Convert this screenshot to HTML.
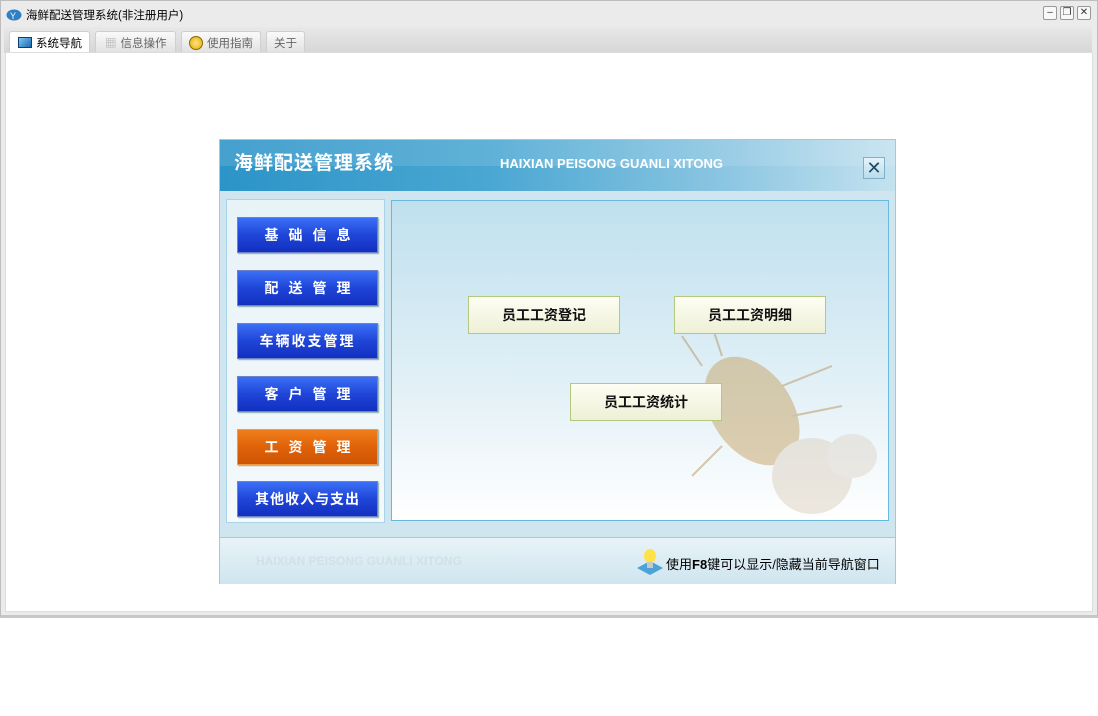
<!DOCTYPE html>
<html><head><meta charset="utf-8"><style>
*{margin:0;padding:0;box-sizing:border-box}
body{width:1098px;height:716px;background:#fff;position:relative;overflow:hidden;font-family:"Liberation Sans","Noto Sans CJK SC",sans-serif}
.abs{position:absolute}
.win{left:0;top:0;width:1098px;height:618px;background:#ecebeb;border:1px solid #bdbdbd;border-bottom:3px solid #c8c6c6}
.title{left:26px;top:7px;font-size:11.5px;color:#000}
.tabs{left:4px;top:27px;width:1088px;height:26px;background:linear-gradient(#e8e8e8,#d6d6d6)}
.tab{top:31px;height:21px;font-size:11.5px;color:#666;background:linear-gradient(#fafafa,#e2e2e2);border:1px solid #cfcfcf;border-bottom:none;border-radius:3px 3px 0 0;padding:3px 0 0 0}
.content{left:5px;top:52px;width:1088px;height:560px;background:#fff;border:1px solid #ddd}
.wb{top:6px;width:14px;height:14px;border:1px solid #999;border-radius:2px;background:#f8f8f8;font-size:10px;line-height:12px;text-align:center;color:#333}
.dlg{left:219px;top:139px;width:677px;height:445px;background:#cfe6f0;border:1px solid #9ccbe0}
.hdr{left:0;top:0;width:675px;height:51px;background:linear-gradient(90deg,#2c94c8 0%,#4aa7d2 40%,#8cc6e2 75%,#c4e2ef 100%)}
.hdr:after{content:"";position:absolute;left:0;top:0;width:100%;height:26px;background:rgba(255,255,255,.12)}
.lp{left:6px;top:59px;width:159px;height:324px;background:linear-gradient(#e8f3f8,#f4f9fb);border:1px solid #a9d3e6}
.btn{left:10px;width:141px;height:36px;color:#fff;font-size:14px;font-weight:bold;text-align:center;line-height:34px;border:1px solid #6d82c8;box-shadow:1px 1px 1px #8aa;background:linear-gradient(#3b6ff5,#1f45d8 50%,#1230c0)}
.org{background:linear-gradient(#f07f1b,#e0620a 50%,#cf5504);border-color:#f29a45}
.rp{left:171px;top:60px;width:498px;height:321px;border:1px solid #68b7dc;background:linear-gradient(#bfe0ee,#e3f1f7 60%,#fff)}
.cb{width:152px;height:38px;border:1px solid #b3c97e;background:linear-gradient(#fdfdf3,#eef0d6);font-size:14px;font-weight:bold;text-align:center;line-height:36px;color:#111}
.ftr{left:0;top:397px;width:675px;height:47px;border-top:1px solid #c8b7e0;background:linear-gradient(#e8f3f8,#cfe5ef)}
</style></head><body>
<div class="abs win"></div>
<svg class="abs" style="left:6px;top:7px" width="16" height="14"><ellipse cx="8" cy="8" rx="7.5" ry="5.5" fill="#2f7fc4"/><text x="4" y="12" font-size="9" fill="#fff" font-family="Liberation Sans">Y</text></svg>
<div class="abs title">海鲜配送管理系统(非注册用户)</div>
<div class="abs wb" style="left:1043px">–</div>
<div class="abs wb" style="left:1060px">❐</div>
<div class="abs wb" style="left:1077px">✕</div>
<div class="abs tabs"></div>
<div class="abs tab" style="left:9px;width:81px;background:#fff;color:#000;height:22px"><span style="display:inline-block;width:14px;height:11px;border:1px solid #0b3d7a;background:linear-gradient(135deg,#7cc6f2,#1c6ab4);margin:0 4px 0 8px;vertical-align:-1px"></span>系统导航</div>
<div class="abs tab" style="left:95px;width:81px"><span style="color:#aaa;margin:0 4px 0 9px">▦</span>信息操作</div>
<div class="abs tab" style="left:181px;width:80px"><span style="display:inline-block;width:14px;height:14px;border-radius:50%;background:radial-gradient(#ffe680,#e8a800);border:1px solid #8a6a00;margin:0 4px 0 7px;vertical-align:-3px"></span>使用指南</div>
<div class="abs tab" style="left:266px;width:39px;text-align:center">关于</div>
<div class="abs content"></div>
<div class="abs dlg">
 <div class="abs hdr"></div>
 <div class="abs" style="left:14px;top:8px;font-size:19px;font-weight:bold;color:#fff;letter-spacing:1px;z-index:2">海鲜配送管理系统</div>
 <div class="abs" style="left:280px;top:16px;font-size:13px;font-weight:bold;color:#fff;z-index:2">HAIXIAN PEISONG GUANLI XITONG</div>
 <div class="abs" style="left:643px;top:17px;width:22px;height:22px;border:1px solid #7fb0c8;background:linear-gradient(#e6f3f9,#b9dcec);font-size:18px;line-height:20px;text-align:center;color:#1d4a66;z-index:2">✕</div>
 <div class="abs lp">
  <div class="abs btn" style="top:17px;letter-spacing:10px;padding-left:10px">基础信息</div>
  <div class="abs btn" style="top:70px;letter-spacing:10px;padding-left:10px">配送管理</div>
  <div class="abs btn" style="top:123px;letter-spacing:2px">车辆收支管理</div>
  <div class="abs btn" style="top:176px;letter-spacing:10px;padding-left:10px">客户管理</div>
  <div class="abs btn org" style="top:229px;letter-spacing:10px;padding-left:10px">工资管理</div>
  <div class="abs btn" style="top:281px;letter-spacing:1px">其他收入与支出</div>
 </div>
 <div class="abs rp">
  <svg class="abs" style="left:270px;top:125px" width="228" height="200"><g opacity=".45"><ellipse cx="90" cy="85" rx="40" ry="60" transform="rotate(-35 90 85)" fill="#c29a55"/><path d="M40 40 L20 10 M60 30 L50 0 M120 60 L170 40 M130 90 L180 80 M60 120 L30 150" stroke="#b08a4a" stroke-width="2"/><ellipse cx="150" cy="150" rx="40" ry="38" fill="#d8cbb8"/><ellipse cx="190" cy="130" rx="25" ry="22" fill="#ddd2c4"/></g></svg>
  <div class="abs cb" style="left:76px;top:95px">员工工资登记</div>
  <div class="abs cb" style="left:282px;top:95px">员工工资明细</div>
  <div class="abs cb" style="left:178px;top:182px">员工工资统计</div>
 </div>
 <div class="abs ftr">
  <div class="abs" style="left:36px;top:16px;font-size:12px;font-weight:bold;color:#d3e0e8">HAIXIAN PEISONG GUANLI XITONG</div>
  <svg class="abs" style="left:416px;top:9px" width="28" height="28"><path d="M1 21 L14 14 L27 21 L14 28Z" fill="#4ba3d8"/><ellipse cx="14" cy="9" rx="6" ry="7" fill="#ffe24a"/><rect x="11" y="15" width="6" height="6" fill="#c8c8c8"/></svg>
  <div class="abs" style="left:446px;top:16px;font-size:13px;color:#000">使用<b>F8</b>键可以显示/隐藏当前导航窗口</div>
 </div>
</div>
</body></html>
